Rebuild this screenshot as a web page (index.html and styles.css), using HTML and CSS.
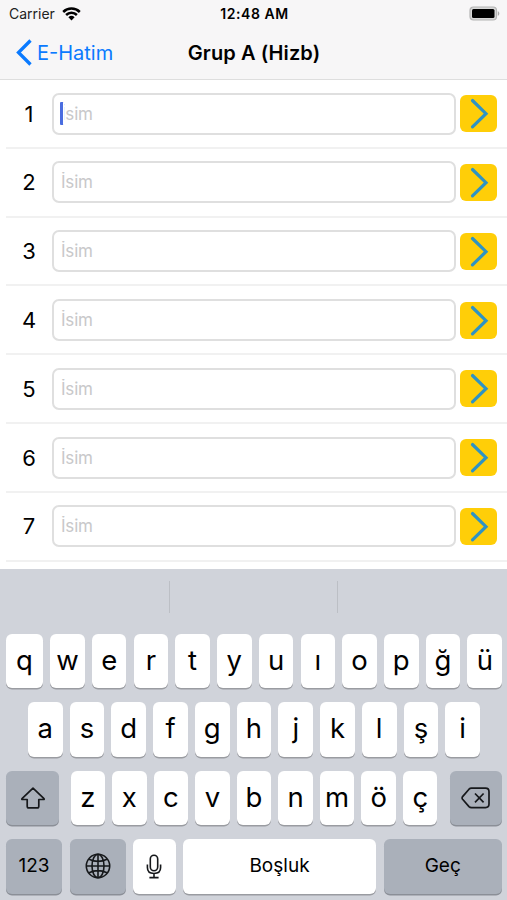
FILE: index.html
```html
<!DOCTYPE html>
<html lang="tr">
<head>
  <meta charset="UTF-8">
  <meta name="viewport" content="width=device-width, initial-scale=1.0">
  <title>Grup A (Hizb)</title>
  <link rel="stylesheet" href="styles.css">
</head>
<body>
  <header class="header">
    <div class="status">
      <div class="carrier">
        <span>Carrier</span>
        <svg width="19" height="14" viewBox="0 0 19 14">
          <path d="M1.200 5a11.800 11.800 0 0 1 16.600 0M4.100 8a7.600 7.600 0 0 1 10.800 0" fill="none" stroke="#000" stroke-width="2.500"/>
          <path d="M9.500 13.400 6.400 10.300a4.500 4.500 0 0 1 6.200 0z"/>
        </svg>
      </div>
      <span class="time">12:48 AM</span>
      <svg class="battery" width="31" height="15" viewBox="0 0 31 15">
        <rect x="1" y="1" width="26.5" height="13" rx="3.500" fill="#d8d8d8" stroke="#b4b4b4" stroke-width="1.200"/>
        <rect x="3" y="3" width="22.500" height="9" rx="1.500"/>
        <path d="M28.800 5.200c2 .6 2 4 0 4.600z" fill="#aaa"/>
      </svg>
    </div>
    <div class="nav">
      <div class="back">
        <svg width="16" height="27" viewBox="0 0 16 27">
          <path d="M14.500 1.500 2.500 13.500 14.500 25.500" fill="none" stroke="#0a7aff" stroke-width="3.300"/>
        </svg>
        <span>E-Hatim</span>
      </div>
      <h1>Grup A (Hizb)</h1>
    </div>
  </header>

  <main class="list" id="list"></main>

  <section class="keyboard">
    <div class="suggestions"><span></span><span></span><span></span></div>
    <div class="keys keys-top" data-keys="qwertyuıopğü"></div>
    <div class="keys keys-middle" data-keys="asdfghjklşi"></div>
    <div class="keys keys-bottom">
      <div class="key dark shift">
        <svg width="26" height="24" viewBox="0 0 26 24">
          <path d="M13 2.200 2 12.600q-.6.900.5.900h4.700v6.700q0 1.700 1.700 1.700h8.200q1.700 0 1.700-1.700v-6.700h4.700q1.100 0 .5-.9z" fill="none" stroke="#16181b" stroke-width="1.700" stroke-linejoin="round"/>
        </svg>
      </div>
      <div class="keys letters" data-keys="zxcvbnmöç"></div>
      <div class="key dark delete">
        <svg width="30" height="24" viewBox="0 0 30 24">
          <path d="M10.500 2.200h14q3.500 0 3.500 3.500v12.400q0 3.500-3.500 3.500h-14q-1.500 0-2.500-1L1.600 13.200q-1-1.300 0-2.600L8 3.200q1-1 2.500-1zM14 7.500l8.600 8.900M22.600 7.500 14 16.400" fill="none" stroke="#16181b" stroke-width="1.700" stroke-linejoin="round"/>
        </svg>
      </div>
    </div>
    <div class="keys keys-space">
      <div class="key dark text">123</div>
      <div class="key dark">
        <svg width="26" height="26" viewBox="0 0 26 26">
          <g fill="none" stroke="#16181b" stroke-width="1.600">
            <circle cx="13" cy="13" r="11.700"/>
            <ellipse cx="13" cy="13" rx="6" ry="11.700"/>
            <path d="M13 1.300v23.400M1.300 13h23.400M4 6.200q9 4.400 18 0M4 19.800q9-4.400 18 0"/>
          </g>
        </svg>
      </div>
      <div class="key">
        <svg width="16" height="25" viewBox="0 0 16 25">
          <g fill="none" stroke="#16181b" stroke-width="1.600">
            <rect x="4.300" y="1.200" width="7.400" height="15.600" rx="3.700"/>
            <path d="M1.400 10.500v3q0 6 6.600 6t6.600-6v-3M8 19.500v4M3.400 23.600h9.200"/>
          </g>
        </svg>
      </div>
      <div class="key text">Boşluk</div>
      <div class="key dark text">Geç</div>
    </div>
  </section>

  <script>
    const list = document.getElementById("list");
    for (let i = 1; i <= 7; i++) {
      const row = document.createElement("div");
      row.className = "row";
      row.innerHTML =
        '<span class="number">' + i + '</span>' +
        '<div class="field"><input type="text" placeholder="İsim">' +
        (i === 1 ? '<span class="caret"></span>' : '') + '</div>' +
        '<button class="go"><svg width="37" height="37" viewBox="0 0 37 37">' +
        '<path d="M12.500 5.500 26 18.700 12.500 31.900" fill="none" stroke="#2e93c4" stroke-width="3.200" stroke-linecap="round"/>' +
        '</svg></button>';
      list.appendChild(row);
    }

    document.querySelectorAll("[data-keys]").forEach(group => {
      for (const letter of group.dataset.keys) {
        const key = document.createElement("div");
        key.className = "key";
        key.textContent = letter;
        group.appendChild(key);
      }
    });
  </script>
</body>
</html>
```
FILE: styles.css
```css
* {
  box-sizing: border-box;
}
body {
  margin: 0;
  width: 507px;
  height: 900px;
  overflow: hidden;
  font-family: Inter, "Liberation Sans", sans-serif;
  background: #fff;
  color: #000;
  display: flex;
  flex-direction: column;
}
.header {
  height: 80px;
  background: #f7f6f7;
  border-bottom: 1px solid #dedede;
}
.status {
  height: 27px;
  padding: 0 7px 0 9px;
  display: grid;
  grid-template-columns: 1fr auto 1fr;
  align-items: center;
  font-size: 14px;
}
.carrier {
  display: flex;
  align-items: center;
  gap: 7px;
  color: #222;
}
.time {
  font-weight: 600;
  letter-spacing: 0.55px;
}
.battery {
  justify-self: end;
}
.nav {
  height: 51px;
  padding: 0 15px 0 16px;
  display: grid;
  grid-template-columns: 1fr auto 1fr;
  align-items: center;
}
.back {
  display: flex;
  align-items: center;
  gap: 5px;
  color: #0a7aff;
  font-size: 20px;
}
h1 {
  margin: 0;
  font-size: 20px;
  font-weight: 600;
  letter-spacing: 0.1px;
}
.list {
  height: 489px;
}
.row {
  height: 68.8px;
  margin-left: 6px;
  padding: 0.6px 10px 0 0;
  display: flex;
  align-items: center;
  border-bottom: 2px solid #f1f1f1;
}
.number {
  width: 46px;
  text-align: center;
  font-size: 22px;
}
.field {
  position: relative;
  width: 404px;
  height: 42px;
}
.field input {
  width: 100%;
  height: 100%;
  padding: 0 7px;
  border: 2px solid #dfdfdf;
  border-radius: 7px;
  background: #fff;
  font: 17px Inter, "Liberation Sans", sans-serif;
  letter-spacing: -0.2px;
}
.field input::placeholder {
  color: #c8c8ca;
}
.caret {
  position: absolute;
  left: 8px;
  top: 9px;
  width: 4px;
  height: 23px;
  border-radius: 1px;
  background: #4a6de0;
  border-right: 1px solid #fff;
}
.go {
  width: 37px;
  height: 37px;
  margin-left: auto;
  padding: 0;
  border: 0;
  border-radius: 6px;
  background: #ffce08;
}
.go svg {
  display: block;
}
.keyboard {
  height: 331px;
  padding: 0 5px 0 6px;
  background: #d0d3da;
}
.suggestions {
  height: 64.5px;
  margin: 0 -5px 0 -6px;
  padding: 12px 0 21px;
  display: grid;
  grid-template-columns: 169px 168px 1fr;
}
.suggestions span + span {
  border-left: 1px solid #bcbfc5;
}
.keys {
  display: flex;
  gap: 7.1px;
}
.keys-top,
.keys-middle,
.keys-bottom,
.keys-space {
  height: 54.5px;
  margin-bottom: 14px;
}
.key {
  flex: 1;
  height: 54.5px;
  display: flex;
  align-items: center;
  justify-content: center;
  padding-bottom: 1px;
  border-radius: 6px;
  background: #fff;
  box-shadow: 0 1.5px 0 #9a9ca1;
  font-size: 27.5px;
  font-weight: 400;
}
.keys-top .key:first-child {
  flex: 0 0 37px;
}
.keys-middle {
  padding: 0 22px;
}
.keys-middle .key,
.letters .key {
  padding-bottom: 2px;
}
.keys-bottom {
  gap: 12px;
}
.letters {
  flex: 1;
}
.dark {
  background: #aab0ba;
  box-shadow: 0 1.5px 0 #8b8f97;
}
.shift,
.delete {
  flex: 0 0 52.5px;
  padding: 1px 0 0 1px;
}
.keys-space {
  display: grid;
  grid-template-columns: 56px 56px 42.5px 193px 118.5px;
  gap: 7.5px;
}
.keys-space .key {
  padding-bottom: 0;
}
.keys-space .text {
  font-size: 19px;
  font-weight: 400;
  padding-bottom: 2px;
}
```
